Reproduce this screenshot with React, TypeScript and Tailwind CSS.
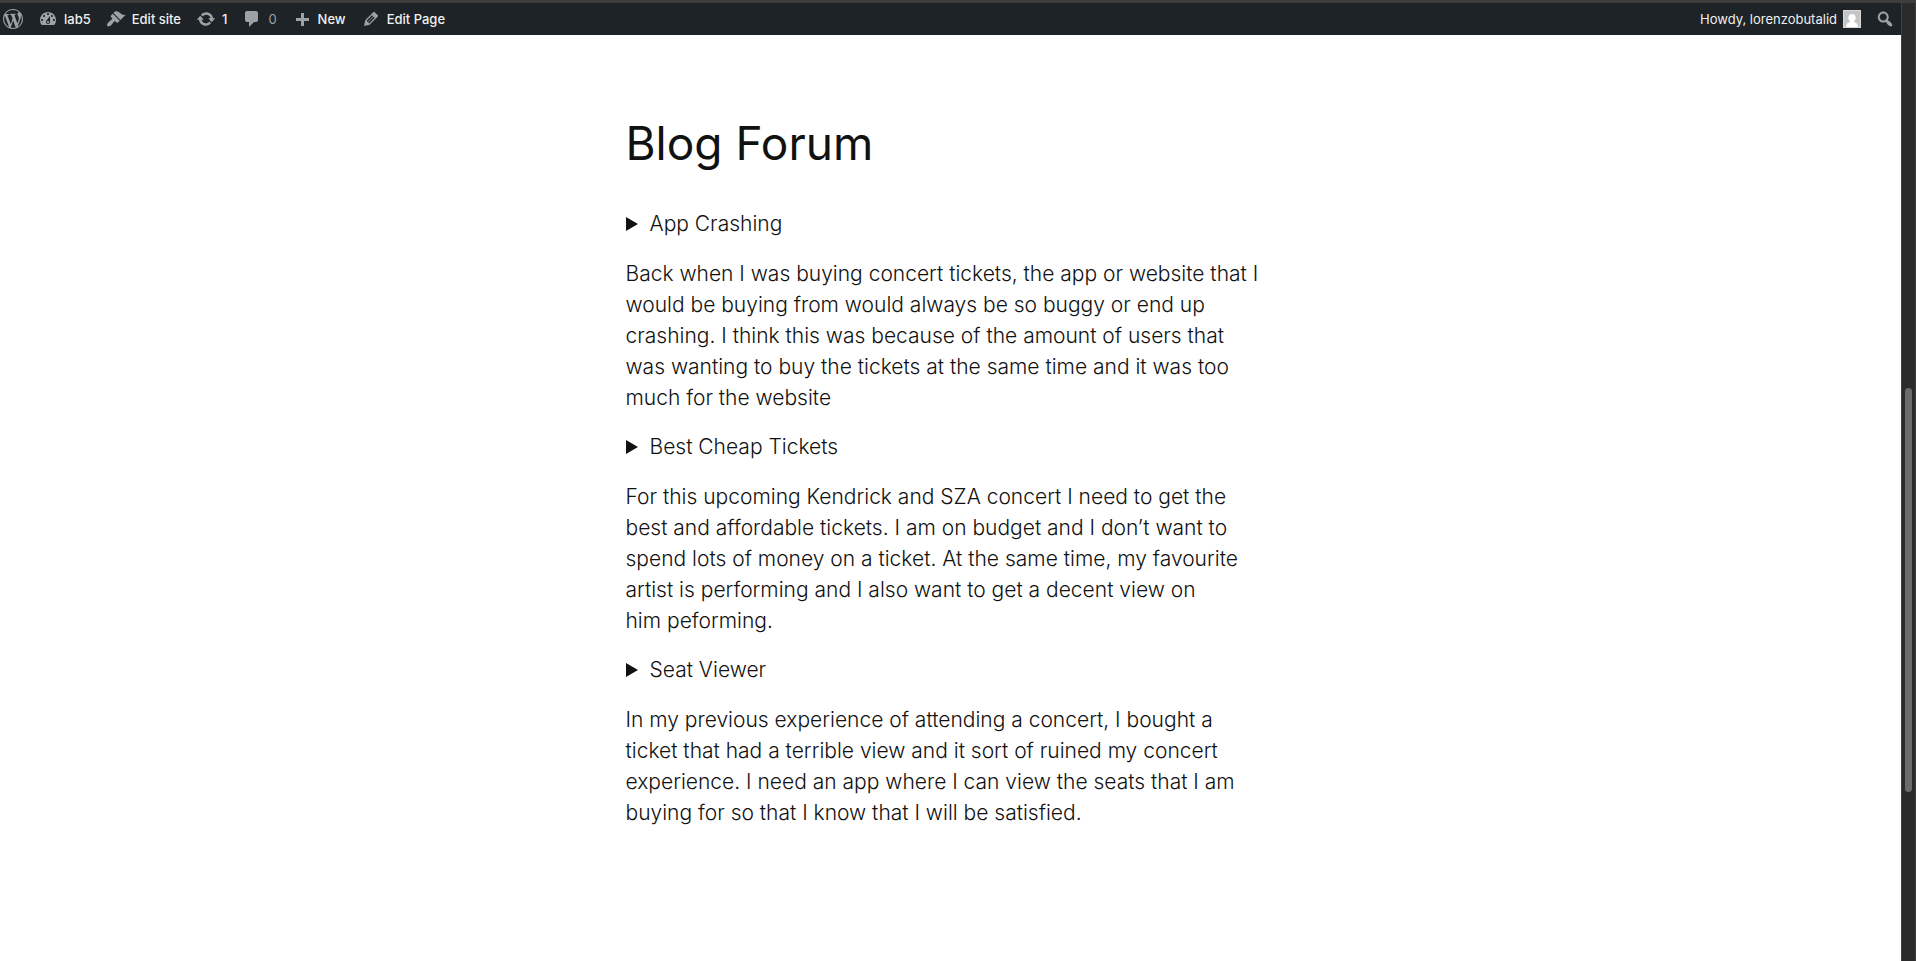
import type { ReactNode } from "react";

const icons = {
  wordpress:
    "M20 10c0-5.51-4.49-10-10-10C4.48 0 0 4.49 0 10c0 5.52 4.48 10 10 10 5.51 0 10-4.48 10-10zM7.78 15.37L4.37 6.22c.55-.02 1.17-.08 1.17-.08.5-.06.44-1.13-.06-1.11 0 0-1.45.11-2.37.11-.18 0-.37 0-.58-.01C4.12 2.69 6.87 1.11 10 1.11c2.33 0 4.45.87 6.05 2.34-.68-.11-1.65.39-1.65 1.58 0 .74.45 1.36.9 2.1.35.61.55 1.36.55 2.46 0 1.49-1.4 5-1.4 5l-3.03-8.37c.54-.02.82-.17.82-.17.5-.05.44-1.25-.06-1.22 0 0-1.44.12-2.38.12-.87 0-2.33-.12-2.33-.12-.5-.03-.56 1.2-.06 1.22l.92.08 1.26 3.41zM17.41 10c.24-.64.74-1.87.43-4.25.7 1.29 1.05 2.71 1.05 4.25 0 3.29-1.73 6.24-4.4 7.78.97-2.59 1.94-5.2 2.92-7.78zM6.1 18.09C3.12 16.65 1.11 13.53 1.11 10c0-1.3.23-2.48.72-3.59C3.25 10.3 4.67 14.2 6.1 18.09zm4.03-6.63l2.58 6.98c-.86.29-1.76.45-2.71.45-.79 0-1.57-.11-2.29-.33.81-2.38 1.62-4.74 2.42-7.1z",
  dashboard:
    "M3.76 16h12.48c1.1-1.37 1.76-3.11 1.76-5 0-4.42-3.58-8-8-8s-8 3.58-8 8c0 1.89.66 3.63 1.76 5zM10 4c.55 0 1 .45 1 1s-.45 1-1 1-1-.45-1-1 .45-1 1-1zM6 6c.55 0 1 .45 1 1s-.45 1-1 1-1-.45-1-1 .45-1 1-1zm8 0c.55 0 1 .45 1 1s-.45 1-1 1-1-.45-1-1 .45-1 1-1zm-5.37 5.55L12 7v6c0 1.1-.9 2-2 2s-2-.9-2-2c0-.57.24-1.08.63-1.45zM4 10c.55 0 1 .45 1 1s-.45 1-1 1-1-.45-1-1 .45-1 1-1zm12 0c.55 0 1 .45 1 1s-.45 1-1 1-1-.45-1-1 .45-1 1-1zm-5 3c0-.55-.45-1-1-1s-1 .45-1 1 .45 1 1 1 1-.45 1-1z",
  appearance:
    "M14.48 11.06L7.41 3.99l1.5-1.5c.5-.56 2.3-.47 3.51.32 1.21.8 1.43 1.28 2.91 2.1 1.18.64 2.45 1.26 4.45.85zm-.71.71L6.7 4.7 4.93 6.47c-.39.39-.39 1.02 0 1.41l1.06 1.06c.39.39.39 1.03 0 1.42-.6.6-1.43 1.11-2.21 1.69-.35.26-.7.53-1.01.84C1.43 14.23.4 16.08 1.4 17.07c.99 1 2.84-.03 4.18-1.36.31-.31.58-.66.85-1.02.57-.78 1.08-1.61 1.69-2.21.39-.39 1.02-.39 1.41 0l1.06 1.06c.39.39 1.02.39 1.41 0z",
  update:
    "M10.2 3.28c3.53 0 6.43 2.61 6.92 6h2.08l-3.5 4-3.5-4h2.32c-.45-1.97-2.21-3.45-4.32-3.45-1.45 0-2.73.71-3.54 1.78L4.95 5.66C6.23 4.2 8.11 3.28 10.2 3.28zm-.4 13.44c-3.52 0-6.43-2.61-6.92-6H.8l3.5-4c1.17 1.33 2.33 2.67 3.5 4H5.48c.45 1.97 2.21 3.45 4.32 3.45 1.45 0 2.73-.71 3.54-1.78l1.71 1.95c-1.28 1.46-3.15 2.38-5.25 2.38z",
  comment:
    "M5 2h9c1.1 0 2 .9 2 2v7c0 1.1-.9 2-2 2h-2l-5 5v-5H5c-1.1 0-2-.9-2-2V4c0-1.1.9-2 2-2z",
  plus: "M17 9v3h-5v5H9v-5H4V9h5V4h3v5h5z",
  edit:
    "M13.89 3.39l2.71 2.72c.46.46.42 1.24.03 1.64l-8.01 8.02-5.56 1.16 1.16-5.58s7.6-7.63 7.99-8.03c.39-.39 1.22-.39 1.68.07zm-2.73 2.79l-5.59 5.61 1.11 1.11 5.54-5.65zm-2.97 8.23l5.58-5.6-1.07-1.08-5.59 5.6z",
  search:
    "M12.14 4.18c1.87 1.87 2.11 4.75.72 6.89.12.1.22.21.36.31.2.16.47.36.81.59.34.24.56.39.66.47.42.31.73.57.94.78.32.32.6.65.84 1 .25.35.44.69.59 1.04.14.35.21.68.18 1-.02.32-.14.59-.36.81s-.49.34-.81.36c-.31.02-.65-.04-.99-.19-.35-.14-.7-.34-1.04-.59-.35-.24-.68-.52-1-.84-.21-.21-.47-.52-.77-.93-.1-.13-.25-.35-.47-.66-.22-.32-.4-.57-.56-.78-.16-.2-.29-.35-.44-.5-2.07 1.09-4.69.76-6.44-.98-2.14-2.15-2.14-5.64 0-7.78 2.15-2.15 5.63-2.15 7.78 0zm-1.41 6.36c1.36-1.37 1.36-3.58 0-4.95-1.37-1.37-3.59-1.37-4.95 0-1.37 1.37-1.37 3.58 0 4.95 1.36 1.37 3.58 1.37 4.95 0z",
};

function Icon({ name }: { name: keyof typeof icons }) {
  return (
    <svg viewBox="0 0 20 20" aria-hidden="true" className="size-5 shrink-0 fill-[#9ca2a7]">
      <path d={icons[name]} />
    </svg>
  );
}

function BarLink({ icon, children }: { icon: keyof typeof icons; children: ReactNode }) {
  return (
    <a href="#" className="flex items-center gap-1.5">
      <Icon name={icon} />
      <span className="pt-0.5">{children}</span>
    </a>
  );
}

const topics = [
  {
    title: "App Crashing",
    lines: [
      "Back when I was buying concert tickets, the app or website that I",
      "would be buying from would always be so buggy or end up",
      "crashing. I think this was because of the amount of users that",
      "was wanting to buy the tickets at the same time and it was too",
      "much for the website",
    ],
  },
  {
    title: "Best Cheap Tickets",
    lines: [
      "For this upcoming Kendrick and SZA concert I need to get the",
      "best and affordable tickets. I am on budget and I don’t want to",
      "spend lots of money on a ticket. At the same time, my favourite",
      "artist is performing and I also want to get a decent view on",
      "him peforming.",
    ],
  },
  {
    title: "Seat Viewer",
    lines: [
      "In my previous experience of attending a concert, I bought a",
      "ticket that had a terrible view and it sort of ruined my concert",
      "experience. I need an app where I can view the seats that I am",
      "buying for so that I know that I will be satisfied.",
    ],
  },
];

export default function App() {
  return (
    <div className="flex min-h-screen flex-col border-t-3 border-[#3e3e3e] bg-white font-['Inter',sans-serif] text-[#111]">
      <div className="flex grow">
        <div className="min-w-0 grow">
          <nav className="flex h-8 items-center justify-between bg-[#1d2327] pr-1.5 pl-[3px] text-[13px] font-medium text-[#f0f0f1]">
            <div className="flex items-center gap-[15px]">
              <a href="#" aria-label="About WordPress">
                <Icon name="wordpress" />
              </a>
              <BarLink icon="dashboard">lab5</BarLink>
              <BarLink icon="appearance">Edit site</BarLink>
              <BarLink icon="update">1</BarLink>
              <BarLink icon="comment">
                <span className="font-normal text-[#9ca2a7]">0</span>
              </BarLink>
              <BarLink icon="plus">New</BarLink>
              <BarLink icon="edit">Edit Page</BarLink>
            </div>
            <div className="flex items-center gap-3.5">
              <a href="#" className="flex items-center gap-1.5 font-normal">
                <span className="pt-0.5">Howdy, lorenzobutalid</span>
                <svg viewBox="0 0 18 18" aria-hidden="true" className="size-[18px]">
                  <path fill="#c5c5c5" d="M0 0h18v18H0z" />
                  <path fill="#fff" d="M9 4c2.300 0 3.700 1.600 3.700 3.700 0 1.500-.7 2.800-1.700 3.500v.8c2 .5 3.600 1.500 4 4.500V17H3v-.5c.4-3 2-4 4-4.500v-.8C6 10.500 5.300 9.200 5.300 7.700 5.300 5.600 6.700 4 9 4z" />
                  <path fill="none" stroke="#d8d8d8" d="M.5.5h17v17H.5z" />
                </svg>
              </a>
              <button type="button" aria-label="Search">
                <Icon name="search" />
              </button>
            </div>
          </nav>
          <main className="mx-auto flex max-w-[650px] flex-col pt-20 pb-20">
            <h1 className="mb-[37px] text-[46px] leading-[56px]">Blog Forum</h1>
            <div className="flex flex-col gap-[18px] text-[21px] leading-[31px] font-light">
              {topics.map((topic) => (
                <section key={topic.title} className="flex flex-col gap-[19px]">
                  <details className="group">
                    <summary className="flex list-none items-center gap-3">
                      <svg viewBox="0 0 12 14" aria-hidden="true" className="h-3.5 w-3 fill-[#111] group-open:rotate-90">
                        <path d="M0 0l12 7L0 14z" />
                      </svg>
                      {topic.title}
                    </summary>
                  </details>
                  <p>
                    {topic.lines.map((line) => (
                      <span key={line} className="block">
                        {line}
                      </span>
                    ))}
                  </p>
                </section>
              ))}
            </div>
          </main>
        </div>
        <div aria-hidden="true" className="flex w-[15px] shrink-0 flex-col border-x border-[#3e3e3e] bg-[#2b2b2b] px-[3px]">
          <div className="grow-385" />
          <div className="grow-404 rounded-full bg-[#6b6b6b]" />
          <div className="grow-169" />
        </div>
      </div>
    </div>
  );
}
